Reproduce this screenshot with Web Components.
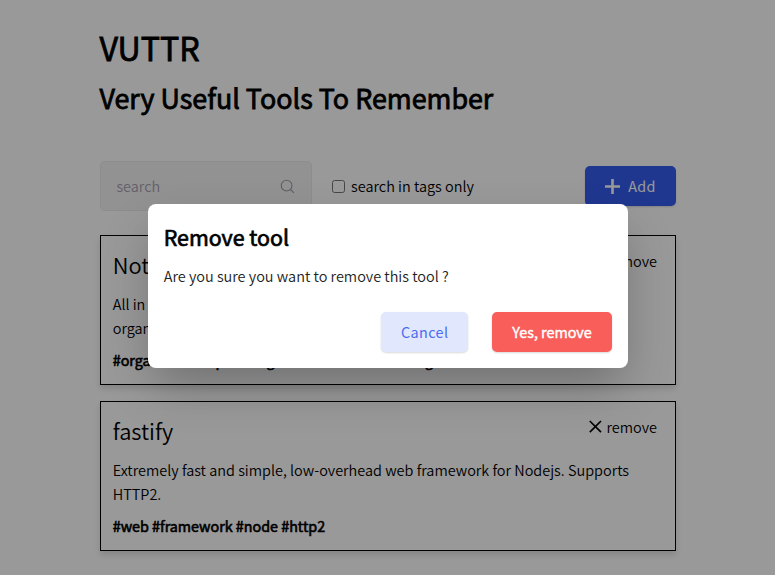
<!DOCTYPE html>
<html lang="en">
<head>
<meta charset="utf-8">
<title>VUTTR</title>
<style>
html,body{margin:0;height:575px;overflow:hidden;background:#fff}
body{font:350 14.48px/24px "Noto Sans CJK SC","Noto Sans",sans-serif;color:#000}
</style>
</head>
<body>
<vuttr-app></vuttr-app>
<script>
const define = (name, html) => customElements.define(name, class extends HTMLElement {
  constructor() {
    super();
    const t = document.createElement('template');
    t.innerHTML = html;
    this.attachShadow({mode: 'open'}).append(t.content.cloneNode(true));
  }
});

define('vuttr-header', `<style>
:host{display:block;margin-left:-.6px}
h1,h2{margin:0;font-weight:400;white-space:nowrap;-webkit-text-stroke:.8px #000}
h1{font-size:32.2px;line-height:48px;padding-bottom:2px}
h2{font-size:26.87px;line-height:50px}
</style><h1>VUTTR</h1><h2>Very Useful Tools To Remember</h2>`);

define('search-field', `<style>
:host{display:flex;box-sizing:border-box;width:212px;height:50px;align-items:center;justify-content:space-between;padding:0 16px 0 15.4px;border:1px solid #ebeaed;border-radius:5px;background:#f5f4f6;color:#a5a0af}
svg{display:block}
</style><span><slot></slot></span>
<svg width="15" height="15" viewBox="0 0 15 15" fill="none" stroke="#a09ca8" stroke-width="1.1"><circle cx="6.6" cy="6.6" r="5.4"/><path d="M10.5 10.5L13.9 13.8"/></svg>`);

define('tag-filter', `<style>
:host{display:flex;align-items:center;gap:6px}
i{box-sizing:border-box;width:13px;height:13px;border:1px solid #767676;border-radius:2.5px;background:#fff}
</style><i></i><span><slot></slot></span>`);

define('app-button', `<style>
:host{display:flex;box-sizing:border-box;height:40px;align-items:center;justify-content:center;gap:8px;border-radius:5px;font-weight:400;font-size:14.35px;letter-spacing:.4px;white-space:nowrap;box-shadow:0 1px 2px rgba(0,0,0,.15)}
:host([kind=add]){width:91px;background:#365df0;color:#fff}
:host([kind=soft]){width:87.5px;background:#e1e7fd;color:#4a6cf0;padding-left:1px}
:host([kind=danger]){width:120px;background:#f95e5a;color:#fff;letter-spacing:0;-webkit-text-stroke:.4px #fff}
</style><slot name="icon"></slot><span><slot></slot></span>`);

define('tool-card', `<style>
:host{display:block;box-sizing:border-box;height:150px;padding:11px 18px 0 11.7px;border:1px solid #000;background:#fff;box-shadow:0 4px 6px rgba(0,0,0,.12)}
header{display:flex;justify-content:space-between;height:36px}
.title{font-size:21.9px;line-height:36px}
.remove{display:flex;align-items:center;gap:4px;height:27px}
svg{display:block}
p{margin:9px 0 0;width:530px;height:48px;white-space:pre-line}
.tags{margin-top:8px;font-weight:400;font-size:14.32px;-webkit-text-stroke:.6px #000}
</style><header><span class="title"><slot name="title"></slot></span>
<span class="remove"><svg width="13" height="13" viewBox="0 0 13 13" fill="none" stroke="#000" stroke-width="1.7"><path d="M.8 1L12 12.2M12 1L.8 12.2"/></svg><span>remove</span></span></header>
<p><slot></slot></p><div class="tags"><slot name="tags"></slot></div>`);

define('confirm-dialog', `<style>
:host{position:absolute;inset:0;background:rgba(0,0,0,.4);width:775px}
section{position:absolute;left:148px;top:204px;box-sizing:border-box;width:480px;height:164px;padding:15px 16px 16px 15.7px;border-radius:8px;background:#fff;box-shadow:0 22px 48px -6px rgba(0,0,0,.27)}
h3{margin:0;font-size:21.4px;font-weight:400;line-height:36px;-webkit-text-stroke:.7px #000}
p{margin:8px 0 0;line-height:26px;color:#222}
footer{display:flex;justify-content:flex-end;gap:24px;margin-top:23px}
</style><section><h3><slot name="title"></slot></h3><p><slot></slot></p>
<footer><app-button kind="soft">Cancel</app-button><app-button kind="danger">Yes, remove</app-button></footer></section>`);

define('vuttr-app', `<style>
:host{display:block;position:relative;width:776px;height:575px;overflow:hidden}
main{display:flex;flex-direction:column;width:576px;margin-left:100px;padding-top:23px}
.bar{display:flex;align-items:center;height:50px;margin-top:38px}
tag-filter{margin-left:20px;margin-right:auto}
.list{display:flex;flex-direction:column;gap:16px;margin-top:24px}
</style><main><vuttr-header></vuttr-header>
<div class="bar"><search-field>search</search-field><tag-filter>search in tags only</tag-filter>
<app-button kind="add"><svg slot="icon" width="15" height="15" viewBox="0 0 15 15" stroke="#fff" stroke-width="2.6"><path d="M7.5 0V15M0 7.5H15"/></svg>Add</app-button></div>
<div class="list">
<tool-card><span slot="title">Notion</span>All in one tool to organize teams and ideas. Write, plan, collaborate, and get
organized.<span slot="tags">#organization #planning #collaboration #writing</span></tool-card>
<tool-card><span slot="title">fastify</span>Extremely fast and simple, low-overhead web framework for Nodejs. Supports
HTTP2.<span slot="tags">#web #framework #node #http2</span></tool-card>
</div></main>
<confirm-dialog><span slot="title">Remove tool</span>Are you sure you want to remove this tool ?</confirm-dialog>`);
</script>
</body>
</html>
